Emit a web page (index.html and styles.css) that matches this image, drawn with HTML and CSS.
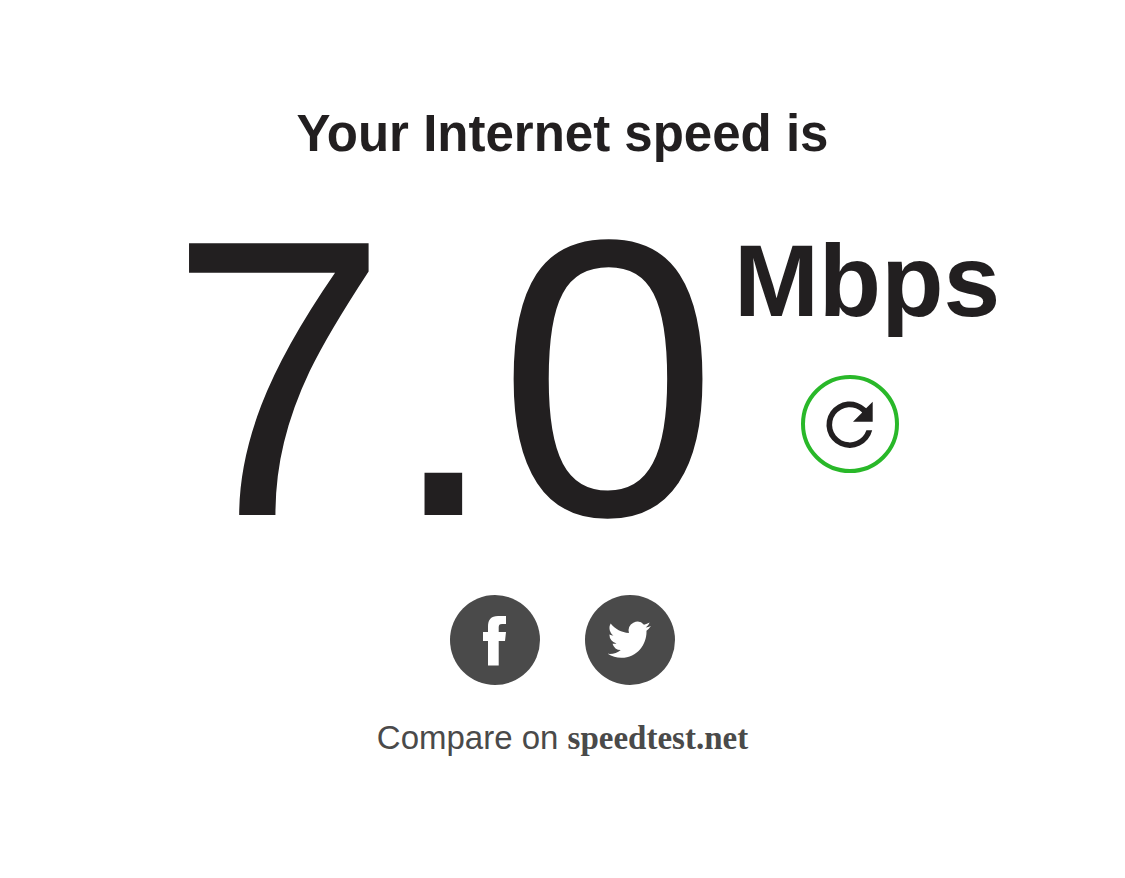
FILE: index.html
```html
<!DOCTYPE html>
<html lang="en">
<head>
<meta charset="UTF-8">
<meta name="viewport" content="width=device-width, initial-scale=1.0">
<title>Internet speed</title>
<link rel="stylesheet" href="styles.css">
</head>
<body>
<main class="container">
    <h1 class="title">Your Internet speed is</h1>

    <div class="result">
        <div class="speed-value">7.0</div>
        <div class="speed-side">
            <div class="speed-units">Mbps</div>
            <button type="button" class="refresh" aria-label="Test again">
                <svg viewBox="0 0 98 98" aria-hidden="true">
                    <circle cx="49" cy="49" r="47" fill="none" stroke="#29b829" stroke-width="4"/>
                    <path fill="#221f20" d="M71.2 55.3A23.2 23.2 0 1 1 65.1 33.3L71.7 26.8V46.7H52L61.2 37.4A17.6 17.6 0 1 0 65.4 55.3Z"/>
                </svg>
            </button>
        </div>
    </div>

    <div class="share">
        <a href="#facebook" class="share-link" aria-label="Facebook">
            <svg viewBox="0 0 90 90" aria-hidden="true">
                <path fill="#fff" d="M56 21V29H52C49.5 29 48.7 30 48.7 32.5V37H56L55 46H48.7V70.5H38V46H33V37H38V31.5C38 25 41 21 48 21Z"/>
            </svg>
        </a>
        <a href="#twitter" class="share-link" aria-label="Twitter">
            <svg viewBox="0 0 90 90" aria-hidden="true">
                <path fill="#fff" transform="translate(22.7 22.6) scale(1.8 1.85)" d="M23.953 4.57a10 10 0 01-2.825.775 4.958 4.958 0 002.163-2.723c-.951.555-2.005.959-3.127 1.184a4.92 4.92 0 00-8.384 4.482C7.69 8.095 4.067 6.13 1.64 3.162a4.822 4.822 0 00-.666 2.475c0 1.71.87 3.213 2.188 4.096a4.904 4.904 0 01-2.228-.616v.06a4.923 4.923 0 003.946 4.827 4.996 4.996 0 01-2.212.085 4.936 4.936 0 004.604 3.417 9.867 9.867 0 01-6.102 2.105c-.39 0-.779-.023-1.17-.067a13.995 13.995 0 007.557 2.209c9.053 0 13.998-7.496 13.998-13.985 0-.21 0-.42-.015-.63A9.935 9.935 0 0024 4.59z"/>
            </svg>
        </a>
    </div>

    <p class="compare">Compare on <a href="#speedtest" class="compare-link">speedtest.net</a></p>
</main>
</body>
</html>
```
FILE: styles.css
```css
body {
    margin: 0;
    background-color: #fff;
    color: #221f20;
    font-family: "Liberation Sans", Arial, sans-serif;
}
.container {
    display: flex;
    flex-direction: column;
    align-items: center;
    padding: 104px 0;
}
.title {
    margin: 0 0 54px;
    font-size: 51px;
    line-height: 60px;
    font-weight: bold;
}
.result {
    display: flex;
    gap: 16px;
    padding-left: 44px;
    margin-bottom: 57px;
}
.speed-value {
    font-size: 395px;
    line-height: 320px;
}
.speed-side {
    padding-top: 11px;
}
.speed-units {
    font-size: 102px;
    line-height: 104px;
    font-weight: bold;
}
.refresh {
    display: block;
    width: 98px;
    height: 98px;
    margin: 42px 0 0 67px;
    padding: 0;
    border: none;
    border-radius: 50%;
    background: none;
    cursor: pointer;
}
.refresh svg,
.share-link svg {
    display: block;
    width: 100%;
    height: 100%;
}
.share {
    display: flex;
    gap: 45px;
    margin-bottom: 33px;
}
.share-link {
    width: 90px;
    height: 90px;
    border-radius: 50%;
    background-color: #4a4a4a;
}
.compare {
    margin: 0;
    color: #4a4a4a;
    font-size: 33px;
    line-height: 40px;
}
.compare-link {
    color: inherit;
    font-family: "Liberation Serif", "Times New Roman", serif;
    font-weight: bold;
    text-decoration: none;
}
```
